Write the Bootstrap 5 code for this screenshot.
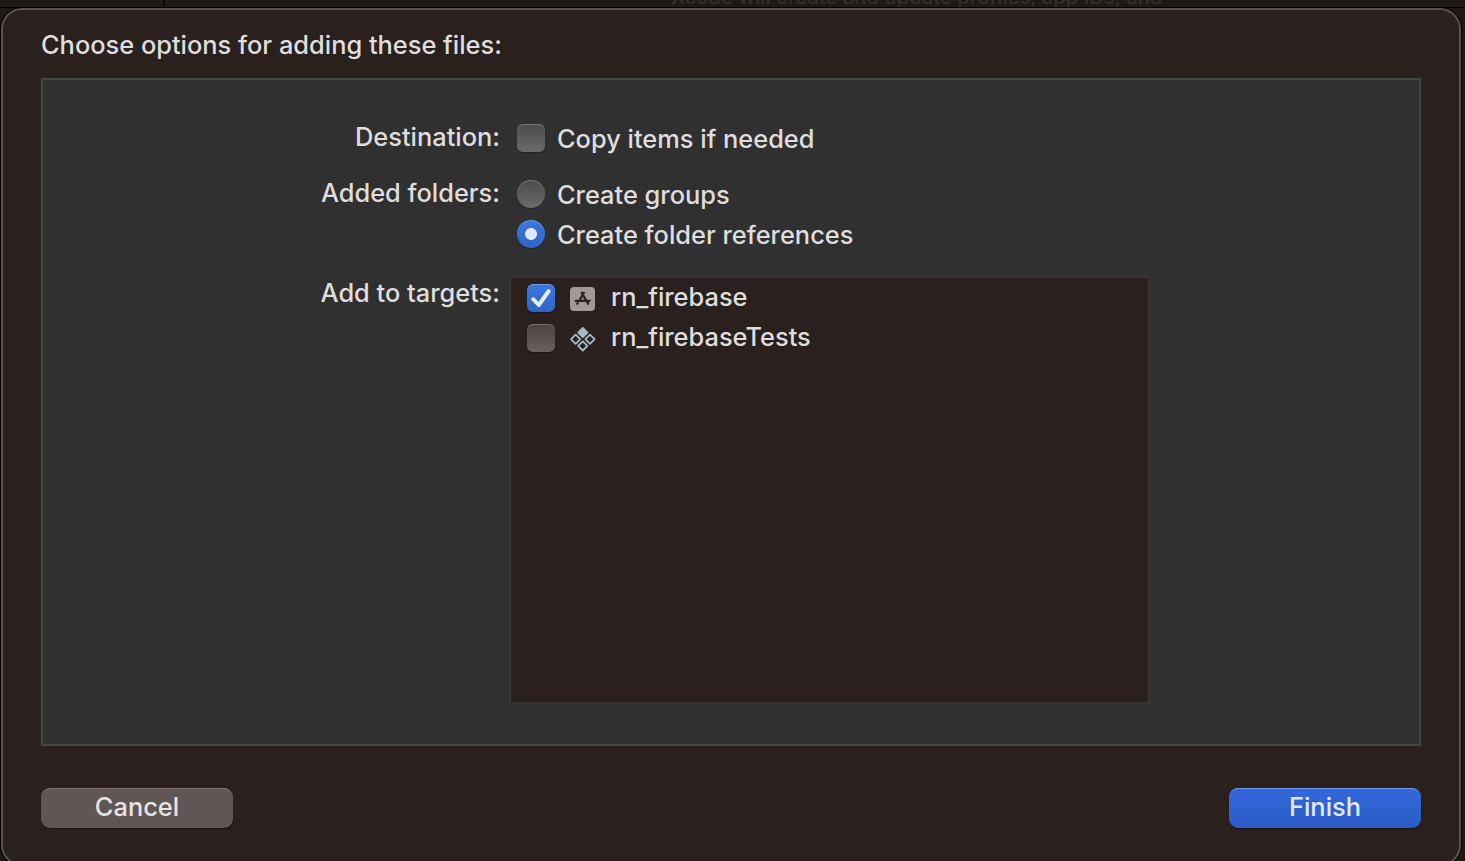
<!DOCTYPE html>
<html lang="en">
<head>
<meta charset="utf-8">
<meta name="viewport" content="width=device-width, initial-scale=1">
<title>Add files</title>
<link href="https://cdn.jsdelivr.net/npm/bootstrap@5.3.0/dist/css/bootstrap.min.css" rel="stylesheet">
<style>
body{height:861px;background:#1d1915;font-family:Inter,"Liberation Sans",sans-serif;font-size:25.4px;font-weight:450;line-height:32px;color:#dfdddd}
.backdrop-strip{height:8px;border-bottom:1px solid #000}
.sidebar-edge{width:165px;border-right:2px solid #0c0a09}
.behind-text{margin-left:506px;margin-top:-17px;font-weight:500;font-size:20.3px;line-height:28px;color:#332e2c;white-space:nowrap;letter-spacing:0}
.sheet{width:1460px;height:858px;margin-left:1px;padding:19px 38px 0;background:#2a201e;border:2px solid #5a5250;border-radius:21px;box-shadow:0 0 0 1px #000}
.sheet-title{margin-bottom:17px}
.panel{width:1380px;height:668px;background:#303030;border:2px solid #444544;padding-top:42px}
.caption-col{width:457px;height:32px;margin-top:-1px;text-align:right;white-space:nowrap}
.choice-col{margin-left:17px}
.folder-row,.copy-row{margin-bottom:24px}
.folder-row{margin-bottom:26px}
.choice{height:32px;gap:12px;white-space:nowrap}
.choice span{padding-top:2px}
.form-check-input.ctl{width:28px;height:28px;margin:0;border:0;flex:none;background:linear-gradient(#4c4c4c,#6a6a6a);box-shadow:0 1px 1px #0005,inset 0 1px 0 #777}
.form-check-input.ctl[type=checkbox]{border-radius:6px}
.form-check-input.ctl:checked{background:linear-gradient(#3b78de,#2e64c5);box-shadow:0 1px 1px #0005,inset 0 1px 0 #6b9ae8}
.form-check-input.ctl[type=radio]:checked{background:radial-gradient(circle,#dde8fa 5.6px,transparent 6.3px),linear-gradient(#3b78de,#2e64c5)}
.form-check-input.ctl[type=checkbox]:checked{background:url("data:image/svg+xml,%3Csvg xmlns='http://www.w3.org/2000/svg' viewBox='0 0 28 28'%3E%3Cpath d='M6.2 15.2 11.8 21 21.7 7' fill='none' stroke='%23e3ecfb' stroke-width='3.9' stroke-linecap='round' stroke-linejoin='round'/%3E%3C/svg%3E"),linear-gradient(#3b78de,#2e64c5)}
.targets .ctl:not(:checked){background:linear-gradient(#4c4240,#6b605e);box-shadow:0 1px 1px #0005,inset 0 1px 0 #786c6a}
.targets{width:641px;height:428px;margin-left:9px;padding:4px 0 0 16px;border:2px solid #363433;background:#2a201e}
.target-row{height:32px;margin-bottom:8px}
.target-row span{padding-bottom:2px}
.target-row svg{width:28px;height:28px;margin:1px 14px 0 14px;flex:none}
.target-caption{margin-top:1px}
.action-bar{width:1380px;margin-top:42px}
.btn.action{width:192px;height:40px;padding:0 0 2px;border:0;border-radius:9px;font-size:25.4px;font-weight:450;line-height:38px;color:#e6e3e3}
.btn.cancel-action{background:#605755;box-shadow:0 1px 1px #0006,inset 0 2px 0 -1px #80736f}
.btn.finish-action{background:linear-gradient(#3368de,#2b5bc4);color:#e2e9fa;box-shadow:0 1px 1px #0006,inset 0 2px 0 -1px #6f99ef}
</style>
<script src="https://cdn.jsdelivr.net/npm/bootstrap@5.3.0/dist/js/bootstrap.bundle.min.js"></script>
</head>
<body class="overflow-hidden">
<div class="backdrop-strip d-flex overflow-hidden">
  <div class="sidebar-edge flex-shrink-0"></div>
  <div class="behind-text">Xcode will create and update profiles, app IDs, and</div>
</div>
<main class="sheet">
  <div class="sheet-title">Choose options for adding these files:</div>
  <section class="panel">
    <div class="copy-row d-flex">
      <div class="caption-col">Destination:</div>
      <div class="choice-col">
        <label class="choice d-flex align-items-center"><input class="form-check-input ctl" type="checkbox"><span>Copy items if needed</span></label>
      </div>
    </div>
    <div class="folder-row d-flex">
      <div class="caption-col">Added folders:</div>
      <div class="choice-col d-flex flex-column gap-2">
        <label class="choice d-flex align-items-center"><input class="form-check-input ctl" type="radio" name="folders"><span>Create groups</span></label>
        <label class="choice d-flex align-items-center"><input class="form-check-input ctl" type="radio" name="folders" checked><span>Create folder references</span></label>
      </div>
    </div>
    <div class="d-flex">
      <div class="caption-col target-caption">Add to targets:</div>
      <div class="targets">
        <label class="target-row d-flex align-items-center"><input class="form-check-input ctl" type="checkbox" checked>
          <svg viewBox="0 0 28 28"><rect x="1" y="2" width="25" height="24" rx="4" fill="#a09997"/><g fill="none" stroke="#2f2523" stroke-width="2.2" stroke-linecap="round"><path d="M12.6 7.6 18.4 17.6M14.9 7.6 10.7 15M6.6 15.9H15.3M18.5 15.9H20.6M8.7 18 8.2 18.9M18.8 18 19.3 18.9"/></g></svg>
          <span>rn_firebase</span></label>
        <label class="target-row d-flex align-items-center"><input class="form-check-input ctl" type="checkbox">
          <svg viewBox="0 0 28 28"><g fill="none" stroke="#a5b8c5" stroke-width="1.8" stroke-linejoin="round"><path fill="#a5b8c5" d="m13.8 3 4.6 4.6-4.6 4.6-4.6-4.6z"/><path d="m6.6 9.6 4.6 4.6-4.6 4.6L2 14.2zM21 9.6l4.6 4.6-4.6 4.6-4.6-4.6zM13.8 16.3l4.6 4.6-4.6 4.6-4.6-4.6z"/></g></svg>
          <span>rn_firebaseTests</span></label>
      </div>
    </div>
  </section>
  <div class="action-bar d-flex justify-content-between">
    <button class="btn action cancel-action" type="button">Cancel</button>
    <button class="btn action finish-action" type="button">Finish</button>
  </div>
</main>
</body>
</html>
